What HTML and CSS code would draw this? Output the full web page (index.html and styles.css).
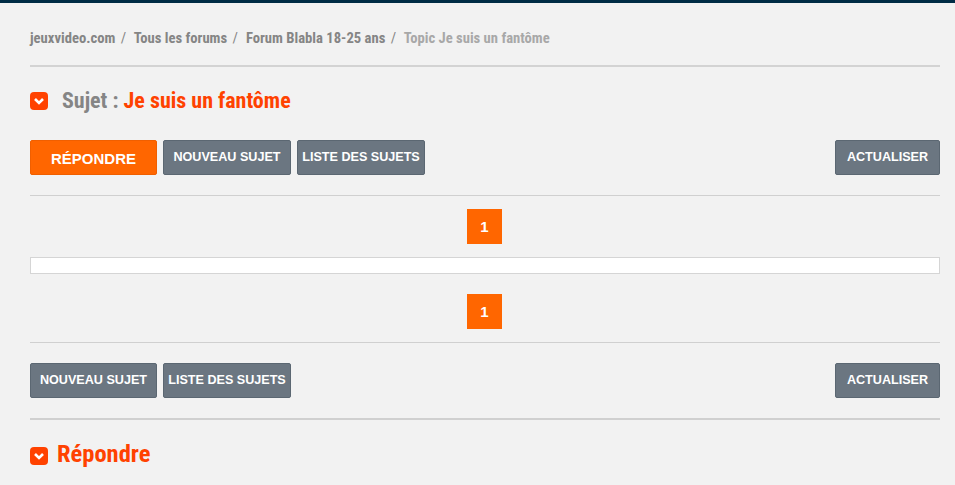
FILE: index.html
```html
<!DOCTYPE html>
<html lang="fr">
    <head>
        <meta charset="utf-8">
        <title>Topic Je suis un fantôme</title>
        <link rel="stylesheet" href="styles.css">
    </head>
    <body>
        <div class="page">
            <div class="crumbs">
                <a>jeuxvideo.com</a><span class="sep">/</span>
                <a>Tous les forums</a><span class="sep">/</span>
                <a>Forum Blabla 18-25 ans</a><span class="sep">/</span>
                <span class="current">Topic Je suis un fantôme</span>
            </div>

            <h1 class="title">
                <span class="toggle"><svg viewBox="0 0 18 18" width="18" height="18"><path d="M5 7l4 4 4-4" fill="none" stroke="#fff" stroke-width="2.6"/></svg></span>
                <span class="title-text"><span class="grey">Sujet :</span> Je suis un fantôme</span>
            </h1>

            <div class="actions top">
                <a class="btn btn-main">RÉPONDRE</a>
                <a class="btn">NOUVEAU SUJET</a>
                <a class="btn">LISTE DES SUJETS</a>
                <a class="btn btn-right">ACTUALISER</a>
            </div>

            <div class="pager first"><span class="page-num">1</span></div>
            <div class="posts"></div>
            <div class="pager second"><span class="page-num">1</span></div>

            <div class="actions bottom">
                <a class="btn">NOUVEAU SUJET</a>
                <a class="btn">LISTE DES SUJETS</a>
                <a class="btn btn-right">ACTUALISER</a>
            </div>

            <h2 class="title reply">
                <span class="toggle"><svg viewBox="0 0 18 18" width="18" height="18"><path d="M5 7l4 4 4-4" fill="none" stroke="#fff" stroke-width="2.6"/></svg></span>
                <span class="title-text">Répondre</span>
            </h2>
        </div>
    </body>
</html>
```

FILE: styles.css
```css
html, body {
    margin: 0;
    height: 485px;
    overflow: hidden;
}
body {
    background: #f2f2f2;
    border-top: 3px solid #002c45;
    font-family: "Liberation Sans", Arial, sans-serif;
}
.page {
    width: 910px;
    margin-left: 30px;
}

.crumbs {
    height: 64px;
    box-sizing: border-box;
    padding-top: 26px;
    border-bottom: 2px solid #d3d3d3;
    font-family: Roboto, sans-serif;
    font-stretch: 75%;
    font-weight: 700;
    font-size: 14.65px;
    line-height: 18px;
    color: #858585;
    white-space: nowrap;
}
.sep {
    margin: 0 4.5px 0 5.5px;
    font-weight: 400;
}
.current {
    color: #a8a8a8;
}

.title {
    display: flex;
    align-items: center;
    height: 34px;
    margin: 16px 0 0;
    font-family: Roboto, sans-serif;
    font-stretch: 75%;
    font-weight: 700;
    font-size: 22px;
    color: #ff4200;
}
.title-text {
    margin-left: 14px;
}
.grey {
    color: #858585;
}
.toggle {
    display: flex;
    width: 18px;
    height: 18px;
    margin-top: 2px;
    border-radius: 4px;
    background: #ff4200;
}

.actions {
    display: flex;
    gap: 6px;
    padding-bottom: 20px;
    border-bottom: 1px solid #d0d0d0;
}
.actions.top {
    margin-top: 23px;
}
.actions.bottom {
    margin-top: 20px;
    border-bottom-width: 2px;
}
.btn {
    box-sizing: border-box;
    width: 127px;
    height: 35px;
    border: 1px solid #5b6772;
    border-radius: 2px;
    background: #6b7681;
    color: #fff;
    font-size: 12.6px;
    font-weight: 700;
    line-height: 33px;
    text-align: center;
}
.btn + .btn {
    width: 128px;
}
.btn-main {
    border-color: #f05f00;
    background: #ff6600;
    font-size: 15px;
    line-height: 35px;
}
.btn.btn-right {
    width: 105px;
    margin-left: auto;
}

.pager {
    display: flex;
    justify-content: center;
    padding-right: 1px;
}
.pager.first {
    margin-top: 13px;
}
.pager.second {
    margin-top: 20px;
    padding-bottom: 13px;
    border-bottom: 1px solid #d0d0d0;
}
.page-num {
    width: 35px;
    height: 35px;
    background: #ff6600;
    color: #fff;
    font-size: 15px;
    font-weight: 700;
    line-height: 36px;
    text-align: center;
}
.posts {
    box-sizing: border-box;
    height: 17px;
    margin-top: 13px;
    border: 1px solid #d5d5d5;
    background: #fff;
}

.reply {
    margin-top: 16px;
    font-size: 24.5px;
}
.reply .toggle {
    margin-top: 5px;
}
.reply .title-text {
    margin-left: 9px;
}
```
